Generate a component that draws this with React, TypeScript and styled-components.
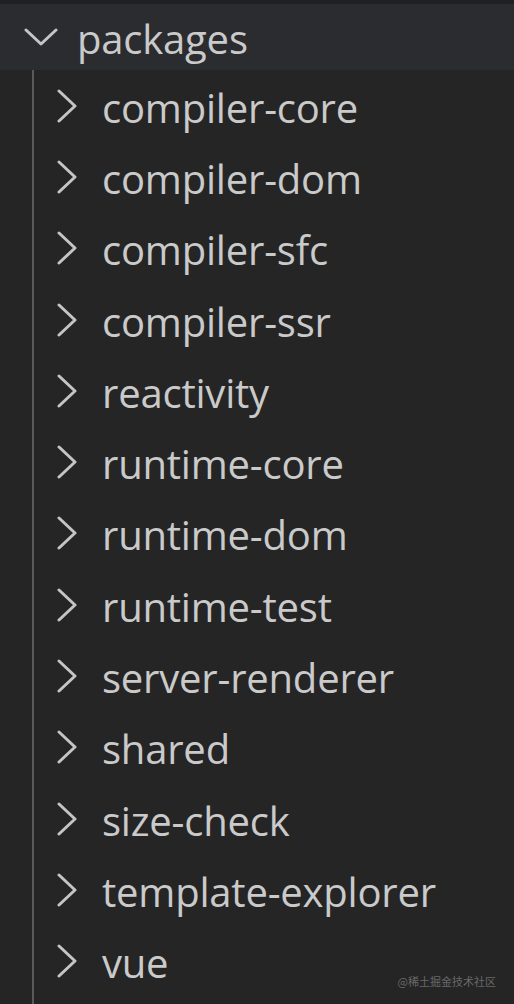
import styled, { createGlobalStyle } from "styled-components";

const packages = [
  "compiler-core",
  "compiler-dom",
  "compiler-sfc",
  "compiler-ssr",
  "reactivity",
  "runtime-core",
  "runtime-dom",
  "runtime-test",
  "server-renderer",
  "shared",
  "size-check",
  "template-explorer",
  "vue",
];

const GlobalStyle = createGlobalStyle`
  html, body {
    margin: 0;
    padding: 0;
    background: #252526;
  }
`;

const ChevronDown = () => (
  <svg width="34" height="20" viewBox="0 0 34 20" fill="none">
    <path d="M2 3 L17 17 L32 3" stroke="#c5c5c5" strokeWidth="3" strokeLinecap="round" strokeLinejoin="round" />
  </svg>
);

const ChevronRight = () => (
  <svg width="22" height="34" viewBox="0 0 22 34" fill="none">
    <path d="M3 2 L19 17 L3 32" stroke="#c5c5c5" strokeWidth="3" strokeLinecap="round" strokeLinejoin="round" />
  </svg>
);

const App = () => {
  return (
    <Explorer>
      <GlobalStyle />
      <TopEdge />
      <FolderHeader>
        <Twistie>
          <ChevronDown />
        </Twistie>
        <Label>packages</Label>
      </FolderHeader>
      <Children>
        {packages.map(name => (
          <Row key={name}>
            <Twistie>
              <ChevronRight />
            </Twistie>
            <Label>{name}</Label>
          </Row>
        ))}
      </Children>
      <Watermark>@稀土掘金技术社区</Watermark>
    </Explorer>
  );
};

const Explorer = styled.div`
  position: relative;
  display: flex;
  flex-direction: column;
  width: 514px;
  height: 1004px;
  overflow: hidden;
  background: #252526;
  font-family: "Open Sans", "Noto Sans", sans-serif;
`;

const TopEdge = styled.div`
  flex: none;
  height: 4px;
  background: #1f2023;
`;

const FolderHeader = styled.div`
  flex: none;
  height: 66px;
  display: flex;
  align-items: center;
  gap: 19px;
  padding-left: 24px;
  background: #2b2c30;
`;

const Children = styled.div`
  flex: 1;
  margin-left: 32px;
  border-left: 2px solid #5a5a5a;
  padding-left: 22px;
`;

const Row = styled.div`
  height: 71.3px;
  display: flex;
  align-items: center;
  gap: 24px;
`;

const Twistie = styled.span`
  display: flex;
  align-items: center;
  justify-content: center;
`;

const Label = styled.span`
  color: #cacaca;
  font-size: 40px;
  line-height: 1;
  letter-spacing: -0.2px;
  margin-top: 4px;
  white-space: nowrap;
`;

const Watermark = styled.div`
  position: absolute;
  right: 18px;
  bottom: 15px;
  color: #686868;
  font-size: 11px;
  font-family: "Noto Sans CJK SC", "Noto Sans", sans-serif;
`;

export default App;
